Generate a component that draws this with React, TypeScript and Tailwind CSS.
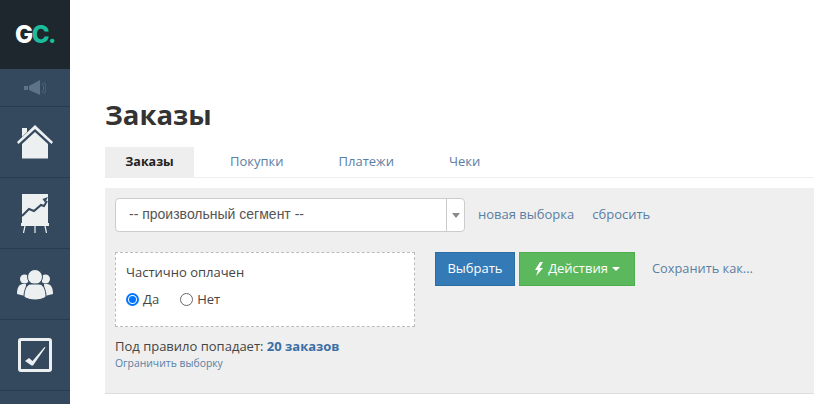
function HomeIcon() {
  return (
    <svg width="36" height="34" viewBox="0 0 36 34" fill="#ecf0f1">
      <path d="M5 3h5v4l-5 5z" />
      <path d="M18 0 36 17l-1.500 2L18 4 1.500 19 0 17z" />
      <path d="M18 7 31 19v14.500H5V19z" />
    </svg>
  );
}

function ChartIcon() {
  return (
    <svg width="28" height="39" viewBox="0 0 28 39">
      <rect x="1" y="0" width="26" height="29" fill="#ecf0f1" />
      <path d="M1 22 8 15l5 2 7-6 3 1 3-5" fill="none" stroke="#34495e" strokeWidth="2" />
      <path d="M24 8.500l3-5.500-5.500 2z" fill="#34495e" />
      <rect x="0" y="29" width="28" height="3" fill="#ecf0f1" />
      <path d="M4 32 2.500 39M14 32v7M24 32l1.500 7" stroke="#ecf0f1" strokeWidth="1.200" fill="none" />
    </svg>
  );
}

function UsersIcon() {
  return (
    <svg width="36" height="31" viewBox="0 0 36 31" fill="#ecf0f1">
      <circle cx="7.500" cy="10" r="4.500" />
      <circle cx="28.500" cy="10" r="4.500" />
      <path d="M0 25c0-6 2-10 6-10h3l-1 12z" />
      <path d="M36 25c0-6-2-10-6-10h-3l1 12z" />
      <circle cx="18" cy="8" r="7.500" stroke="#34495e" strokeWidth="1" />
      <path d="M7 28c0-8 3-13 7-13h8c4 0 7 5 7 13-3 2-7 3-11 3s-8-1-11-3z" stroke="#34495e" strokeWidth="1" />
    </svg>
  );
}

function CheckIcon() {
  return (
    <svg width="34" height="34" viewBox="0 0 34 34">
      <rect x="1.500" y="1.500" width="31" height="31" rx="1.500" fill="none" stroke="#ecf0f1" strokeWidth="3" />
      <path d="M7 23l4-3 3.500 3 12-14 1 .5L15 27.500h-1.500z" fill="#ecf0f1" />
    </svg>
  );
}

function NavRow({ children }: { children: React.ReactNode }) {
  return (
    <div className="h-[71px] flex items-center justify-center border-b border-[#2a3b4d]">
      {children}
    </div>
  );
}

export default function App() {
  return (
    <div className="flex h-[404px] w-[814px] overflow-hidden bg-white font-['Open_Sans',sans-serif] text-[14px] text-[#333]">
      <aside className="w-[70px] shrink-0 bg-[#34495e] flex flex-col">
        <div className="h-[69px] bg-[#1e272e] flex items-center justify-center text-[24px] tracking-[-1.500px] leading-none font-['Inter',sans-serif] font-extrabold">
          <span className="text-white">G</span>
          <span className="text-[#1abc9c]">C.</span>
        </div>
        <div className="h-[38px] flex items-center justify-center border-b border-[#2a3b4d]">
          <svg width="22" height="16" viewBox="0 0 22 16" fill="#5d7389">
            <rect x="0" y="6" width="4" height="4" />
            <path d="M5 6l11-6v15L5 10z" />
            <path d="M18 3c2 3 2 7 0 10M20 2c2.500 4 2.500 8 0 12" fill="none" stroke="#5d7389" strokeWidth="0.700" />
          </svg>
        </div>
        <NavRow><HomeIcon /></NavRow>
        <NavRow><ChartIcon /></NavRow>
        <NavRow><UsersIcon /></NavRow>
        <NavRow><CheckIcon /></NavRow>
      </aside>

      <main className="flex-1 min-w-0 pl-[35px] pt-[98px]">
        <h1 className="text-[27.500px] leading-[34px] font-bold text-[#333]">Заказы</h1>

        <div className="mt-[15px] flex h-[31px] border-b border-[#eee] text-[13px] text-[#5b7ea3]">
          <div className="w-[89px] h-[30px] bg-[#eee] flex items-center justify-center font-bold text-[12.500px] text-[#222]">Заказы</div>
          <div className="ml-[36px] h-[30px] flex items-center">Покупки</div>
          <div className="ml-[55px] h-[30px] flex items-center">Платежи</div>
          <div className="ml-[55px] h-[30px] flex items-center">Чеки</div>
        </div>

        <section className="mt-[10px] h-[206px] bg-[#efefef] border-b border-[#ddd] pl-[10px] pt-[10px]">
          <div className="flex items-center h-[34px]">
            <div className="w-[350px] h-[34px] bg-white border border-[#ccc] rounded flex items-center">
              <span className="flex-1 pl-[13px] pb-[1px] text-[14px] font-['Liberation_Sans',sans-serif] text-[#555]">-- произвольный сегмент --</span>
              <span className="w-[18px] h-full border-l border-[#ccc] flex items-center justify-center">
                <span className="border-x-[4px] border-x-transparent border-t-[5px] border-t-[#888]" />
              </span>
            </div>
            <a className="ml-[13px] text-[13px] text-[#5b7ea3]">новая выборка</a>
            <a className="ml-[18px] text-[13px] text-[#5b7ea3]">сбросить</a>
          </div>

          <div className="mt-[20px] flex items-start">
            <div className="w-[300px] h-[75px] bg-white border border-dashed border-[#bbb] pl-[10px] pt-[10px] text-[13px] text-[#444]">
              <div className="leading-[18px]">Частично оплачен</div>
              <div className="mt-[9px] flex items-center leading-[18px]">
                <span className="w-[13px] h-[13px] rounded-full border-2 border-[#0075ff] flex items-center justify-center">
                  <span className="w-[7px] h-[7px] rounded-full bg-[#0075ff]" />
                </span>
                <span className="ml-[4px]">Да</span>
                <span className="ml-[21px] w-[13px] h-[13px] rounded-full border border-[#666] bg-white" />
                <span className="ml-[4px]">Нет</span>
              </div>
            </div>
            <button className="ml-[20px] w-[80px] h-[34px] bg-[#337ab7] border border-[#2e6da4] text-white text-[13px]">Выбрать</button>
            <button className="ml-[4px] w-[116px] h-[34px] bg-[#5cb85c] border border-[#4cae4c] text-white text-[13px] flex items-center justify-center">
              <svg width="10" height="14" viewBox="0 0 10 14" fill="white" className="mr-[4px]">
                <path d="M6 0 1 8h3l-2 6 7-8H5.500L9 0z" />
              </svg>
              Действия
              <span className="ml-[4px] border-x-[4px] border-x-transparent border-t-[4px] border-t-white" />
            </button>
            <a className="ml-[17px] h-[34px] flex items-center text-[12.800px] text-[#5b7ea3]">Сохранить как...</a>
          </div>

          <div className="mt-[10px] text-[13px] leading-[18px] text-[#444]">
            Под правило попадает: <b className="text-[#3b6ea5]">20 заказов</b>
          </div>
          <div className="mt-[1px] text-[10.400px] leading-[14px] text-[#5b7ea3]">Ограничить выборку</div>
        </section>
      </main>
    </div>
  );
}
